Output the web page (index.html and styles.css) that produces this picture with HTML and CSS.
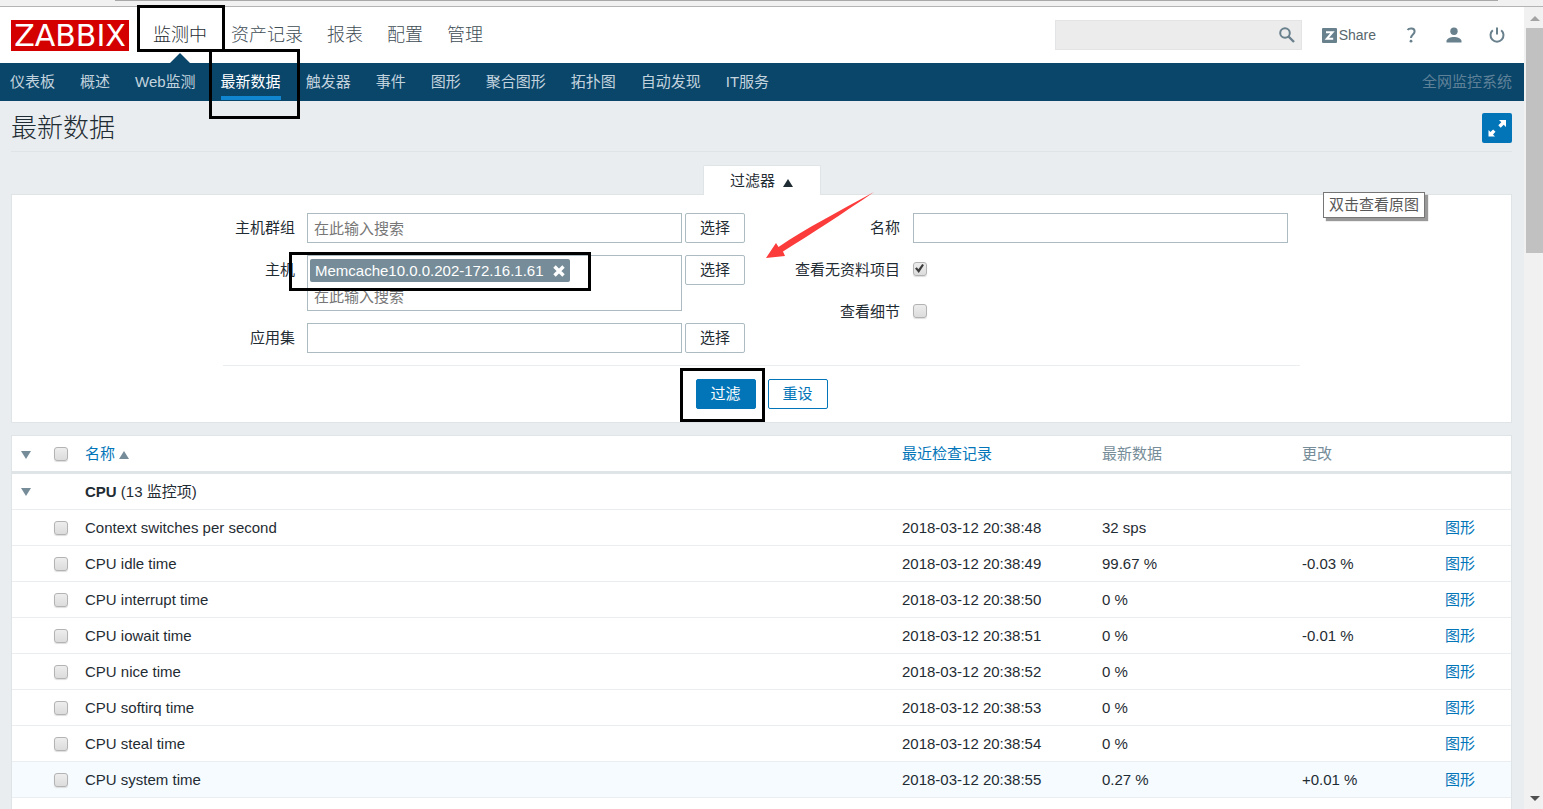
FILE: index.html
```
<!DOCTYPE html>
<html lang="zh-CN">
<head>
<meta charset="utf-8">
<title>最新数据</title>
<link rel="stylesheet" href="styles.css">
</head>
<body>
<div class="chrome-strip"><div class="chrome-line"></div></div>
<div class="viewport">
  <div class="page">
    <header class="header">
      <a class="logo" href="#">ZABBIX</a>
      <nav class="menu">
        <a class="menu-item active" href="#">监测中<span class="mark mark-menu"></span></a>
        <a class="menu-item" href="#">资产记录</a>
        <a class="menu-item" href="#">报表</a>
        <a class="menu-item" href="#">配置</a>
        <a class="menu-item" href="#">管理</a>
      </nav>
      <form class="search">
        <input class="search-input" type="text" aria-label="搜索">
        <button class="icon-button" type="button" aria-label="搜索">
          <svg width="16" height="16" viewBox="0 0 16 16" fill="none" stroke="#69808d" stroke-width="2"><circle cx="6" cy="6" r="4.8"/><path d="M9.5 9.5L15 15" stroke-width="2.4"/></svg>
        </button>
      </form>
      <div class="tools">
        <a class="share" href="#"><svg width="15" height="15" viewBox="0 0 15 15"><rect width="15" height="15" rx="1" fill="#69808d"/><path d="M4 4.200h6.500L4.800 10.800H11.200" fill="none" stroke="#fff" stroke-width="2"/></svg>Share</a>
        <button class="icon-button" type="button" aria-label="帮助"><svg width="16" height="16" viewBox="0 0 16 16"><path d="M4.600 3C5.800 1 11.600.4 11.600 4.400c0 3-3.600 3.200-3.600 6.600" fill="none" stroke="#69808d" stroke-width="2"/><circle cx="8" cy="14.200" r="1.400" fill="#69808d"/></svg></button>
        <button class="icon-button" type="button" aria-label="用户"><svg width="16" height="16" viewBox="0 0 16 16" fill="#69808d"><circle cx="8" cy="4.200" r="3.700"/><path d="M0.500 15.500v-1.800C1 11.400 4.600 10 8 10s7 1.400 7.500 3.700v1.800z"/></svg></button>
        <button class="icon-button" type="button" aria-label="退出"><svg width="16" height="16" viewBox="0 0 16 16" fill="none" stroke="#69808d" stroke-width="2"><path d="M8 0.500v7M3.800 3.200A6.500 6.500 0 1 0 12.200 3.200"/></svg></button>
      </div>
    </header>
    <nav class="subnav">
      <a href="#">仪表板</a>
      <a href="#">概述</a>
      <a href="#">Web监测</a>
      <a class="selected" href="#">最新数据<span class="mark mark-subnav"></span></a>
      <a href="#">触发器</a>
      <a href="#">事件</a>
      <a href="#">图形</a>
      <a href="#">聚合图形</a>
      <a href="#">拓扑图</a>
      <a href="#">自动发现</a>
      <a href="#">IT服务</a>
      <span class="system-name">全网监控系统</span>
    </nav>
    <main class="content">
      <div class="title-row">
        <h1>最新数据</h1>
        <button class="fullscreen" type="button" aria-label="全屏">
          <svg width="20" height="20" viewBox="0 0 20 20" fill="#fff"><path d="M12 2h7v7l-2.300-2.300-3 3-2.400-2.400 3-3z"/><path d="M8 18.500H1.500V12l2 2 2.600-2.600 2.400 2.400L6 16.500z"/></svg>
        </button>
      </div>
      <div class="tab-row"><button class="filter-tab" type="button">过滤器<span class="tri-up dark"></span></button></div>
      <form class="filter">
        <div class="filter-grid">
          <div class="filter-left">
            <div class="field"><label for="groups">主机群组</label><input id="groups" type="text" placeholder="在此输入搜索"><button class="btn" type="button">选择</button></div>
            <div class="field"><label for="hosts">主机</label>
              <div class="multi">
                <span class="tag">Memcache10.0.0.202-172.16.1.61<button class="tag-close" type="button" aria-label="移除"><svg width="12" height="12" viewBox="0 0 12 12" stroke="#fff" stroke-width="3.400"><path d="M1.500 1.500l9 9M10.500 1.500l-9 9"/></svg></button></span>
                <input id="hosts" type="text" placeholder="在此输入搜索">
              </div>
              <button class="btn" type="button">选择</button>
              <span class="mark mark-host"></span>
            </div>
            <div class="field"><label for="apps">应用集</label><input id="apps" type="text"><button class="btn" type="button">选择</button></div>
          </div>
          <div class="filter-right">
            <div class="field"><label for="name">名称</label><input id="name" type="text"></div>
            <div class="field"><label for="nodata">查看无资料项目</label><input id="nodata" type="checkbox" checked></div>
            <div class="field"><label for="details">查看细节</label><input id="details" type="checkbox"></div>
          </div>
          <svg class="arrow" width="108" height="67" viewBox="0 0 108 67"><path d="M0 66L10 51l2.500 4C40 36 72 20 108 0 76 22 45 42 17 59.500L19 64z" fill="#fc3b3b"/></svg>
        </div>
        <div class="actions">
          <span class="apply"><button class="btn primary" type="button">过滤</button><span class="mark mark-apply"></span></span>
          <button class="btn outline" type="button">重设</button>
        </div>
        <div class="tooltip">双击查看原图</div>
      </form>
      <div class="table-box">
        <table>
          <colgroup><col class="c-toggle"><col class="c-check"><col><col class="c-data"><col class="c-data"><col class="c-change"><col class="c-link"></colgroup>
          <thead>
            <tr><th><span class="tri-down"></span></th><th><input type="checkbox" aria-label="全选"></th><th><a href="#">名称<span class="tri-up"></span></a></th><th><a href="#">最近检查记录</a></th><th>最新数据</th><th>更改</th><th></th></tr>
          </thead>
          <tbody>
            <tr><td><span class="tri-down"></span></td><td></td><td colspan="5"><b>CPU</b> (13 监控项)</td></tr>
            <tr><td></td><td><input type="checkbox" aria-label="Context switches per second"></td><td>Context switches per second</td><td>2018-03-12 20:38:48</td><td>32 sps</td><td></td><td><a href="#">图形</a></td></tr>
            <tr><td></td><td><input type="checkbox" aria-label="CPU idle time"></td><td>CPU idle time</td><td>2018-03-12 20:38:49</td><td>99.67 %</td><td>-0.03 %</td><td><a href="#">图形</a></td></tr>
            <tr><td></td><td><input type="checkbox" aria-label="CPU interrupt time"></td><td>CPU interrupt time</td><td>2018-03-12 20:38:50</td><td>0 %</td><td></td><td><a href="#">图形</a></td></tr>
            <tr><td></td><td><input type="checkbox" aria-label="CPU iowait time"></td><td>CPU iowait time</td><td>2018-03-12 20:38:51</td><td>0 %</td><td>-0.01 %</td><td><a href="#">图形</a></td></tr>
            <tr><td></td><td><input type="checkbox" aria-label="CPU nice time"></td><td>CPU nice time</td><td>2018-03-12 20:38:52</td><td>0 %</td><td></td><td><a href="#">图形</a></td></tr>
            <tr><td></td><td><input type="checkbox" aria-label="CPU softirq time"></td><td>CPU softirq time</td><td>2018-03-12 20:38:53</td><td>0 %</td><td></td><td><a href="#">图形</a></td></tr>
            <tr><td></td><td><input type="checkbox" aria-label="CPU steal time"></td><td>CPU steal time</td><td>2018-03-12 20:38:54</td><td>0 %</td><td></td><td><a href="#">图形</a></td></tr>
            <tr class="hover"><td></td><td><input type="checkbox" aria-label="CPU system time"></td><td>CPU system time</td><td>2018-03-12 20:38:55</td><td>0.27 %</td><td>+0.01 %</td><td><a href="#">图形</a></td></tr>
            <tr><td></td><td><input type="checkbox" aria-label="监控项"></td><td></td><td></td><td></td><td></td><td></td></tr>
          </tbody>
        </table>
      </div>
    </main>
  </div>
  <div class="scrollbar"><span class="scroll-up"></span><span class="scroll-thumb"></span><span class="scroll-down"></span></div>
</div>
</body>
</html>
```
FILE: styles.css
```
* { box-sizing: border-box; }
body {
  margin: 0;
  height: 100vh;
  overflow: hidden;
  display: flex;
  flex-direction: column;
  background: #e9edf0;
  color: #1f2c33;
  font: 400 15px/20px "Liberation Sans", "Noto Sans CJK SC", sans-serif;
}
a { color: #0275b8; text-decoration: none; }
button, input { font: inherit; color: inherit; }
button { padding: 0; border: 0; background: none; }
svg { display: block; flex: none; }

.chrome-strip { flex: none; height: 7px; padding: 0 45px 0 115px; background: #f1f1f1; border-bottom: 1px solid #b4b4b4; }
.chrome-line { height: 1px; background: #a8a8a8; }
.viewport { flex: 1; min-height: 0; display: flex; }
.page { flex: 1; min-width: 0; }

.header { display: flex; align-items: center; height: 56px; padding: 0 19px 0 11px; background: #fff; }
.logo { width: 118px; height: 31px; background: #d40000; color: #fff; font: 30px/31px "DejaVu Sans", sans-serif; text-align: center; }
.menu { display: flex; gap: 24px; padding-left: 24px; font-size: 18px; font-weight: 300; line-height: 56px; }
.menu-item { position: relative; color: #3f4d55; white-space: nowrap; }
.menu-item.active { color: #1f2c33; }
.menu-item.active::after {
  content: "";
  position: absolute;
  bottom: 0;
  left: 17px;
  border: 10px solid transparent;
  border-top: 0;
  border-bottom-color: #0a466a;
}
.search { display: flex; align-items: center; width: 247px; height: 30px; margin-left: auto; padding-right: 6px; background: #ececec; border: 1px solid #e2e4e5; }
.search-input { flex: 1; min-width: 0; height: 28px; border: 0; background: none; }
.tools { display: flex; align-items: center; gap: 27px; padding-left: 20px; }
.share { display: flex; align-items: center; gap: 2px; color: #58666e; font-size: 14px; }

.subnav { display: flex; gap: 25px; height: 38px; padding: 0 12px 0 10px; background: #0a466a; line-height: 38px; white-space: nowrap; }
.subnav a { position: relative; color: #c3d3de; }
.subnav .selected { color: #fff; box-shadow: inset 0 -1px #0a466a, inset 0 -5px #0f86cf; }
.system-name { margin-left: auto; color: #5f8198; }

.content { padding: 0 12px 0 11px; }
.title-row { display: flex; justify-content: space-between; align-items: center; height: 51px; padding-top: 3px; border-bottom: 1px solid #dfe4e7; }
h1 { margin: 0; font-size: 26px; line-height: 36px; font-weight: 300; }
.fullscreen { display: grid; place-items: center; width: 30px; height: 30px; border-radius: 2px; background: #0275b8; }
.tab-row { display: flex; justify-content: center; padding-top: 13px; }
.filter-tab { position: relative; z-index: 1; display: flex; align-items: center; justify-content: center; gap: 8px; width: 118px; height: 30px; margin-bottom: -1px; background: #fff; border: 1px solid #dfe4e7; border-bottom: 0; border-radius: 2px 2px 0 0; }

.filter { position: relative; padding: 18px 0 13px; background: #fff; border: 1px solid #dfe4e7; }
.filter-grid { position: relative; display: flex; width: 1077px; max-width: 100%; margin: 0 auto; padding-bottom: 12px; border-bottom: 1px solid #ebeef0; }
.filter-left { display: flex; flex-direction: column; gap: 12px; width: 522px; }
.filter-right { display: flex; flex-direction: column; gap: 12px; flex: 1; padding-right: 12px; }
.field { position: relative; display: flex; align-items: flex-start; min-height: 30px; }
.field label { width: 72px; margin-right: 12px; line-height: 30px; text-align: right; white-space: nowrap; }
.filter-right label { width: 155px; margin-right: 13px; }
.field input[type="text"], .multi { flex: 1; min-width: 0; height: 30px; padding: 0 6px; background: #fff; border: 1px solid #acbbc2; }
.filter-left .btn { margin-left: 3px; }
.field ::placeholder { color: #777; opacity: 1; }
.field .multi { display: flex; flex-direction: column; align-items: flex-start; height: 56px; padding: 3px 2px 0; }
.field .multi input { width: 100%; height: 28px; padding: 0 4px; border: 0; background: none; }
.tag { display: flex; align-items: center; gap: 9px; flex: none; height: 23px; padding: 0 5px; border-radius: 2px; background: #768d99; color: #fff; white-space: nowrap; }
.btn { flex: none; width: 60px; height: 30px; background: #fff; border: 1px solid #acbbc2; border-radius: 2px; line-height: 28px; }
.primary { background: #0275b8; border-color: #0275b8; color: #fff; }
.outline { border-color: #0275b8; color: #0275b8; }
.actions { display: flex; justify-content: center; gap: 12px; padding-top: 13px; }
.apply { position: relative; display: flex; }

input[type="checkbox"] {
  appearance: none;
  display: block;
  width: 14px;
  height: 14px;
  margin: 0;
  border: 1px solid #b3b3b3;
  border-radius: 3px;
  background: linear-gradient(#ededed, #dcdcdc);
  box-shadow: 0 1px 1px #ddd;
}
.field input[type="checkbox"] { margin-top: 7px; }
input[type="checkbox"]:checked::before {
  content: "";
  display: block;
  width: 9px;
  height: 9px;
  margin: 1px;
  background: #3c3c3c;
  clip-path: polygon(0 50%, 20% 35%, 38% 58%, 80% 0, 100% 12%, 42% 100%);
}

.table-box { margin-top: 12px; background: #fff; border: 1px solid #dfe4e7; }
table { width: 100%; table-layout: fixed; border-collapse: separate; border-spacing: 0; }
.c-toggle { width: 37px; }
.c-check { width: 31px; }
.c-data { width: 200px; }
.c-change { width: 143px; }
.c-link { width: 71px; }
th, td { height: 36px; padding: 0 5px; border-bottom: 1px solid #ebeef0; text-align: left; font-weight: 400; white-space: nowrap; }
th { height: 38px; border-bottom: 3px solid #dfe4e7; color: #768d99; }
th:first-child, td:first-child { padding-left: 9px; }
th .tri-down { margin-top: 3px; }
.hover { background: #f5fbff; }
.tri-down { display: block; width: 10px; border: 5px solid transparent; border-top: 8px solid #768d99; border-bottom: 0; }
.tri-up { display: inline-block; margin-left: 4px; border: 5px solid transparent; border-bottom: 8px solid #768d99; border-top: 0; }
.tri-up.dark { margin: 4px 0 0; border-bottom-color: #1f2c33; }

.tooltip { position: absolute; top: -3px; right: 86px; padding: 2px 5px; background: #fff; border: 1px solid #767676; box-shadow: 3px 3px 1px #999; color: #575757; line-height: 20px; }
.arrow { position: absolute; left: 543px; top: -21px; }
.mark { position: absolute; z-index: 2; border: 3px solid #000; pointer-events: none; }
.mark-menu { left: -16px; top: -2px; width: 88px; height: 47px; }
.mark-subnav { left: -12px; top: -14px; width: 91px; height: 70px; }
.mark-host { left: 66px; top: -3px; width: 302px; height: 39px; }
.mark-apply { left: -16px; top: -11px; width: 85px; height: 54px; }

.scrollbar { display: flex; flex-direction: column; align-items: center; width: 19px; padding: 9px 0 8px 2px; background: #f1f1f1; }
.scroll-up { border: 5px solid transparent; border-top: 0; border-bottom-color: #a3a3a3; }
.scroll-thumb { width: 17px; height: 225px; margin-top: 7px; background: #c1c1c1; }
.scroll-down { margin-top: auto; border: 5px solid transparent; border-bottom: 0; border-top-color: #505050; }
```
